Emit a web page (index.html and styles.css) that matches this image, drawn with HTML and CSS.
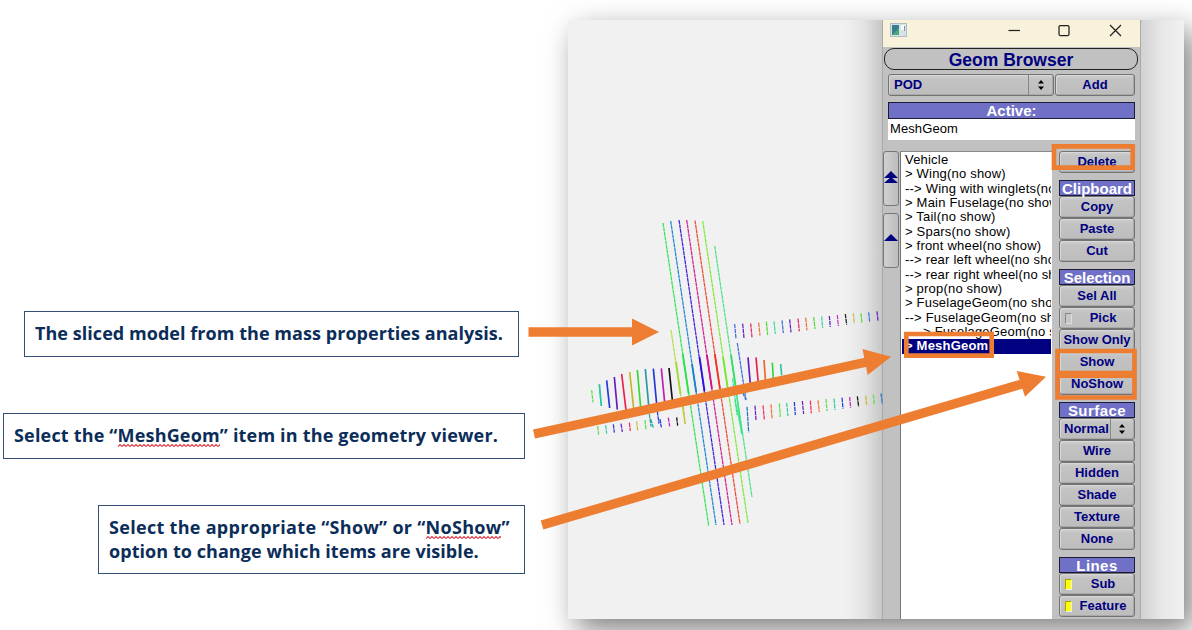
FILE: index.html
```html
<!DOCTYPE html>
<html lang="en">
<head>
<meta charset="utf-8">
<title>Geom Browser guide</title>
<link rel="stylesheet" href="styles.css">
</head>
<body>
<main class="slide">
  <section class="notes">
    <p class="note note-model"><span class="t1">The sliced model from the mass properties analysis.</span></p>
    <p class="note note-select"><span class="t2">Select the “<u>MeshGeom</u>” item in the geometry viewer.</span></p>
    <p class="note note-show"><span class="t3">Select the appropriate “Show” or “<u>NoShow</u>”</span><span class="t4">option to change which items are visible.</span></p>
  </section>
  <section class="capture">
    <div class="viewport"></div>
    <div class="window">
      <header class="titlebar">
        <svg class="appicon" viewBox="0 0 17 14"><rect x=".5" y=".5" width="16" height="13" fill="#d5e3e8" stroke="#aebdc4"/><rect x="2" y="2" width="7" height="10" fill="#367f8c"/><path d="M2 12L9 5V12Z" fill="#4aa77b"/><rect x="11" y="2" width="4" height="5" fill="#f5fafc"/><path d="M14.500 3V8" stroke="#6e98ad"/></svg>
        <svg class="controls" viewBox="0 0 120 22"><g fill="none" stroke="#222" stroke-width="1.25"><path d="M.5 7.500H12"/><rect x="51" y="2.500" width="10" height="10" rx="1.2"/><path d="M102 2L113 13M113 2L102 13"/></g></svg>
      </header>
      <h1 class="heading">Geom Browser</h1>
      <div class="create">
        <div class="choice"><span>POD</span><i class="spin"><svg viewBox="0 0 8 12"><path d="M1 4.500L4 1L7 4.500ZM1 7.500H7L4 11Z"/></svg></i></div>
        <div class="btn add">Add</div>
      </div>
      <div class="band active">Active:</div>
      <div class="input">MeshGeom</div>
      <div class="browser">
        <div class="movers">
          <div class="mover"><svg viewBox="0 0 14 14"><path d="M0 6L7 -1L14 6ZM0 11L7 5L14 11Z"/></svg></div>
          <div class="mover"><svg viewBox="0 0 14 14"><path d="M0 7L7 0L14 7Z"/></svg></div>
        </div>
        <ul class="list">
          <li>Vehicle</li><li>&gt; Wing(no show)</li><li>--&gt; Wing with winglets(no show)</li><li>&gt; Main Fuselage(no show)</li><li>&gt; Tail(no show)</li><li>&gt; Spars(no show)</li><li>&gt; front wheel(no show)</li><li>--&gt; rear left wheel(no show)</li><li>--&gt; rear right wheel(no show)</li><li>&gt; prop(no show)</li><li>&gt; FuselageGeom(no show)</li><li>--&gt; FuselageGeom(no show)</li><li>----&gt; FuselageGeom(no show)</li><li class="selected">&gt; MeshGeom</li>
        </ul>
        <div class="tools">
          <div class="group"><div class="btn">Delete</div></div>
          <div class="group"><div class="band">Clipboard</div><div class="btn">Copy</div><div class="btn">Paste</div><div class="btn">Cut</div></div>
          <div class="group"><div class="band">Selection</div><div class="btn">Sel All</div><div class="btn check"><i></i><span>Pick</span></div><div class="btn">Show Only</div><div class="btn">Show</div><div class="btn">NoShow</div></div>
          <div class="group"><div class="band wide">Surface</div><div class="btn normal"><span>Normal</span><i class="spin"><svg viewBox="0 0 8 12"><path d="M1 4.500L4 1L7 4.500ZM1 7.500H7L4 11Z"/></svg></i></div><div class="btn">Wire</div><div class="btn">Hidden</div><div class="btn">Shade</div><div class="btn">Texture</div><div class="btn">None</div></div>
          <div class="group"><div class="band wide">Lines</div><div class="btn check on"><i></i><span>Sub</span></div><div class="btn check on"><i></i><span>Feature</span></div></div>
        </div>
      </div>
    </div>
    <div class="backdrop"></div>
  </section>

  <svg class="overlay" viewBox="0 0 1192 630">
    <g class="slices">
      <path stroke="#32e658" d="M663 223L708.700 526"/><path stroke="#2387d2" d="M670.700 221L716 525"/><path stroke="#3f20dc" d="M679 220L724 525"/><path stroke="#d22091" d="M686.700 220L732 525"/><path stroke="#ef4a35" d="M695 220.500L740 524"/><path stroke="#82e83b" d="M702.700 221L748 523"/><path stroke="#4be48a" d="M714.700 246L752 497M735 400L742 434M737 398L741.500 434"/><path stroke="#b3dd42" d="M671 330L685 424"/><path stroke="#3c6de5" d="M737.300 343L746 400"/>
    </g>
    <g class="core">
      <path stroke="#25e34b" d="M682.700 354L688.700 394"/><path stroke="#1882d0" d="M692 364L696.200 392"/><path stroke="#2c10dc" d="M699.500 357L704.500 391"/><path stroke="#d01583" d="M706.900 355L712 389"/><path stroke="#ee3324" d="M714.800 354L720 389"/><path stroke="#72e82e" d="M723 357L727.500 387"/><path stroke="#30df65" d="M731 355L735.600 386"/><path stroke="#a4d936" d="M676 362L680.500 394"/>
    </g>
    <g class="dashes" transform="translate(570 210) scale(.33333)">
      <path stroke="#426fdf" d="M494 342l4 45M636 331l4 38M896 307l3 29"/>
      <path stroke="#6622ca" d="M518 341l4 43M659 328l4 39M778 318l3 33M921 304l3 28"/>
      <path stroke="#dc2d68" d="M542 340l4 42M684 326l4 38"/>
      <path stroke="#ee773a" d="M566 338l4 39M707 323l4 38"/>
      <path stroke="#57da3b" d="M589 335l4 40M731 321l4 36M873 310l3 29"/>
      <path stroke="#43d5ad" d="M612 334l4 38M755 319l3 35"/>
      <path stroke="#c438be" d="M802 315l3 33"/><path stroke="#222" d="M826 312l4 32"/><path stroke="#cebd45" d="M850 310l3 31"/>
    </g>
    <g class="dashes" transform="translate(570 350) scale(.33333)">
      <path stroke="#5de14d" d="M65 120l4 37M628 160l3 41M768 147l3 36M910 134l3 31M83 228l3 26M225 210l3 28"/>
      <path stroke="#36cda1" d="M88 103l6 65M650 159l4 39M792 146l3 34M107 226l3 25"/>
      <path stroke="#263edc" d="M262 184l5 37M673 156l3 39M816 143l3 33M130 223l3 25M270 207l4 25"/>
      <path stroke="#6c24c8" d="M697 153l4 39M555 167l3 45M153 221l4 25"/>
      <path stroke="#ef2f62" d="M721 152l3 38M579 166l4 42M178 218l3 25"/>
      <path stroke="#c5be37" d="M887 137l3 30M200 214l3 27M338 155l8 67"/>
      <path stroke="#29a9a5" d="M238 192l5 38M242 207l8 26"/>
      <path stroke="#be25bd" d="M839 141l3 32M295 203l4 26"/>
      <path stroke="#111" d="M862 139l4 31M320 202l3 25"/>
      <path stroke="#f17635" d="M603 163l3 42M744 151l4 35"/>
      <path stroke="#2978c7" d="M531 170l5 77M933 130l4 32M518 128l10 22"/>
      <path stroke="#32e68b" d="M500 135l17 118M488 85l13 110"/>
    </g>
    <g class="body-slices" transform="translate(570 350) scale(.33333)">
      <path stroke="#33da35" d="M202 60l10 112M607 38l3 48"/><path stroke="#2cc7a1" d="M88 103l6 65M632 42l3 34"/><path stroke="#2338da" d="M110 91l9 83M250 56l12 128"/><path stroke="#651bc4" d="M133 81l9 98M534 22l7 80"/><path stroke="#ec1f49" d="M155 72l13 108M558 22l7 79"/><path stroke="#c2b62a" d="M179 66l12 109"/><path stroke="#2598a5" d="M226 57l12 130"/><path stroke="#be1eb5" d="M274 55l11 112"/><path stroke="#111" d="M297 54l10 96"/><path stroke="#ed6527" d="M582 30l5 69"/>
    </g>
    <g class="marks">
      <path d="M528.500 332H634"/><path d="M534 434L867 362"/><path d="M542 525L1022 384"/>
      <path class="head" d="M632 318.500L659 332L632 345.500ZM862.500 349L891 356.700L867.700 375ZM1016.700 371L1046 376.700L1025 396.700Z"/>
      <g class="frames"><path d="M1054 146.300H1132.700V167.700H1054ZM906.300 334H991.700V355.700H906.300ZM1057.500 351H1134.500V373.200H1057.500ZM1057.500 375.700H1134.500V397.500H1057.500Z"/></g>
    </g>
  </svg>
</main>
</body>
</html>
```
FILE: styles.css
```css
* { box-sizing: border-box; }
body { margin: 0; background: #fff; font-family: "Liberation Sans", Arial, sans-serif; }
.slide { position: relative; width: 1192px; height: 630px; overflow: hidden; display: flex; }
.notes { width: 568px; flex: none; padding-top: 311px; display: flex; flex-direction: column; }
.note { margin: 0; border: 1px solid #354e75; background: #fff; color: #0b2d59; font: bold 18px/24px "Open Sans", sans-serif; font-stretch: 88%; white-space: nowrap; display: flex; flex-direction: column; justify-content: center; padding: 0 0 2px 10px; position: relative; z-index: 1; }
.note-model { width: 495px; height: 46px; margin-left: 24px; }
.note-select { width: 522px; height: 46px; margin: 56px 0 0 3px; }
.note-show { width: 427px; height: 69px; margin: 46px 0 0 98px; }
.t1 { letter-spacing: .05px; }
.t2 { letter-spacing: .18px; }
.t3 { letter-spacing: .3px; }
.t4 { letter-spacing: .06px; }
.note u { text-decoration: none; background: url("data:image/svg+xml,%3Csvg xmlns='http://www.w3.org/2000/svg' width='4' height='3'%3E%3Cpath d='M0 2.500L2 .5L4 2.500' fill='none' stroke='%23e23844' stroke-width='1.1'/%3E%3C/svg%3E") repeat-x 0 21px; }
.capture { width: 616px; height: 599px; margin-top: 20px; flex: none; display: flex; background: #f1f1f1; box-shadow: 9px 11px 28px rgba(0,0,0,.5); }
.viewport { width: 314px; background: linear-gradient(90deg, #f1f1f1 88%, #e5e5e5 94%, #c7c7c7); }
.backdrop { flex: 1; background: linear-gradient(90deg, #d2d2d2, #e8e8e8 50%, #f1f1f1); }
.window { width: 259px; background: #c1c1c1; border-left: 1px solid #aaa; border-right: 1px solid #aaa; overflow: hidden; }
.titlebar { height: 27px; background: #f9f2da; display: flex; justify-content: space-between; padding: 3px 12px 0 7px; }
.appicon { width: 17px; height: 14px; }
.controls { width: 120px; height: 22px; }
.heading { height: 22px; margin: 1px 2px 0 1px; border: 1.5px solid #222; border-radius: 10px; color: #000080; font: bold 17.5px/23px "Liberation Sans", sans-serif; text-align: center; }
.create { height: 22px; margin: 4px 5px 0; display: flex; gap: 1px; }
.choice, .btn { border: 1px solid #737373; border-radius: 3px; background: linear-gradient(#d0d0d0, #c3c3c3 20%, #bdbdbd); box-shadow: inset 1px 1px #d8d8d8, inset -1px -1px #a9a9a9; color: #000080; font: bold 13px/20px "Liberation Sans", sans-serif; }
.choice { width: 166px; display: flex; justify-content: space-between; padding-left: 5px; }
.btn { height: 22px; text-align: center; white-space: nowrap; }
.create .btn { flex: 1; }
.spin { width: 25px; border-left: 1px solid #888; display: grid; place-items: center; }
.spin svg { width: 8px; height: 12px; }
.band { height: 16px; border: 1px solid #1b1b35; background: #7070c7; color: #fff; font: bold 15px/15px "Liberation Sans", sans-serif; text-align: center; }
.active { height: 17px; margin: 6px 5px 0; line-height: 16px; }
.input { height: 21px; margin: 0 5px; background: #fff; padding-left: 2px; font-size: 13px; line-height: 19px; letter-spacing: .1px; }
.browser { margin-top: 11px; height: 468px; display: flex; }
.movers { width: 17px; display: flex; flex-direction: column; gap: 7px; }
.mover { width: 16px; height: 55px; border: 1px solid #777; border-radius: 3px; background: linear-gradient(90deg, #d0d0d0, #bdbdbd); display: grid; place-items: center; }
.mover svg { width: 14px; height: 14px; fill: #000080; overflow: visible; }
.list { width: 152px; margin: 0; padding: 1px 1px 0 1px; border-left: 1px solid #777; border-top: 1px solid #888; background: #fff; list-style: none; overflow: hidden; font-size: 13px; line-height: 14.35px; letter-spacing: .2px; white-space: nowrap; }
.list li { height: 14.35px; padding-left: 3px; overflow: hidden; }
.list .selected { background: #000080; color: #fff; font-weight: bold; }
.tools { width: 76px; margin-left: 7px; display: flex; flex-direction: column; gap: 7px; }
.wide { letter-spacing: .45px; }
.check { display: flex; align-items: center; padding-left: 5px; }
.check i { width: 7px; height: 11px; background: #c7c7c7; border: 1px solid; border-color: #888 #ddd #ddd #888; }
.check.on i { background: #ff0; border-color: #a5a500 #eee #eee #a5a500; }
.check span { flex: 1; text-align: center; }
.normal { display: flex; padding-left: 4px; }
.normal .spin { flex: 1; margin-left: 1px; }
.overlay { position: absolute; inset: 0; width: 1192px; height: 630px; z-index: 2; }
.slices { fill: none; stroke-width: 1.25; stroke-dasharray: 4 .5; }
.core { fill: none; stroke-width: 1.8; }
.dashes { fill: none; stroke-width: 3.8; stroke-dasharray: 13 2; }
.body-slices { fill: none; stroke-width: 5; }
.marks { fill: none; stroke: #ed7d31; stroke-width: 9.3; }
.head { fill: #ed7d31; stroke: none; }
.frames { stroke-width: 4.7; }
```
